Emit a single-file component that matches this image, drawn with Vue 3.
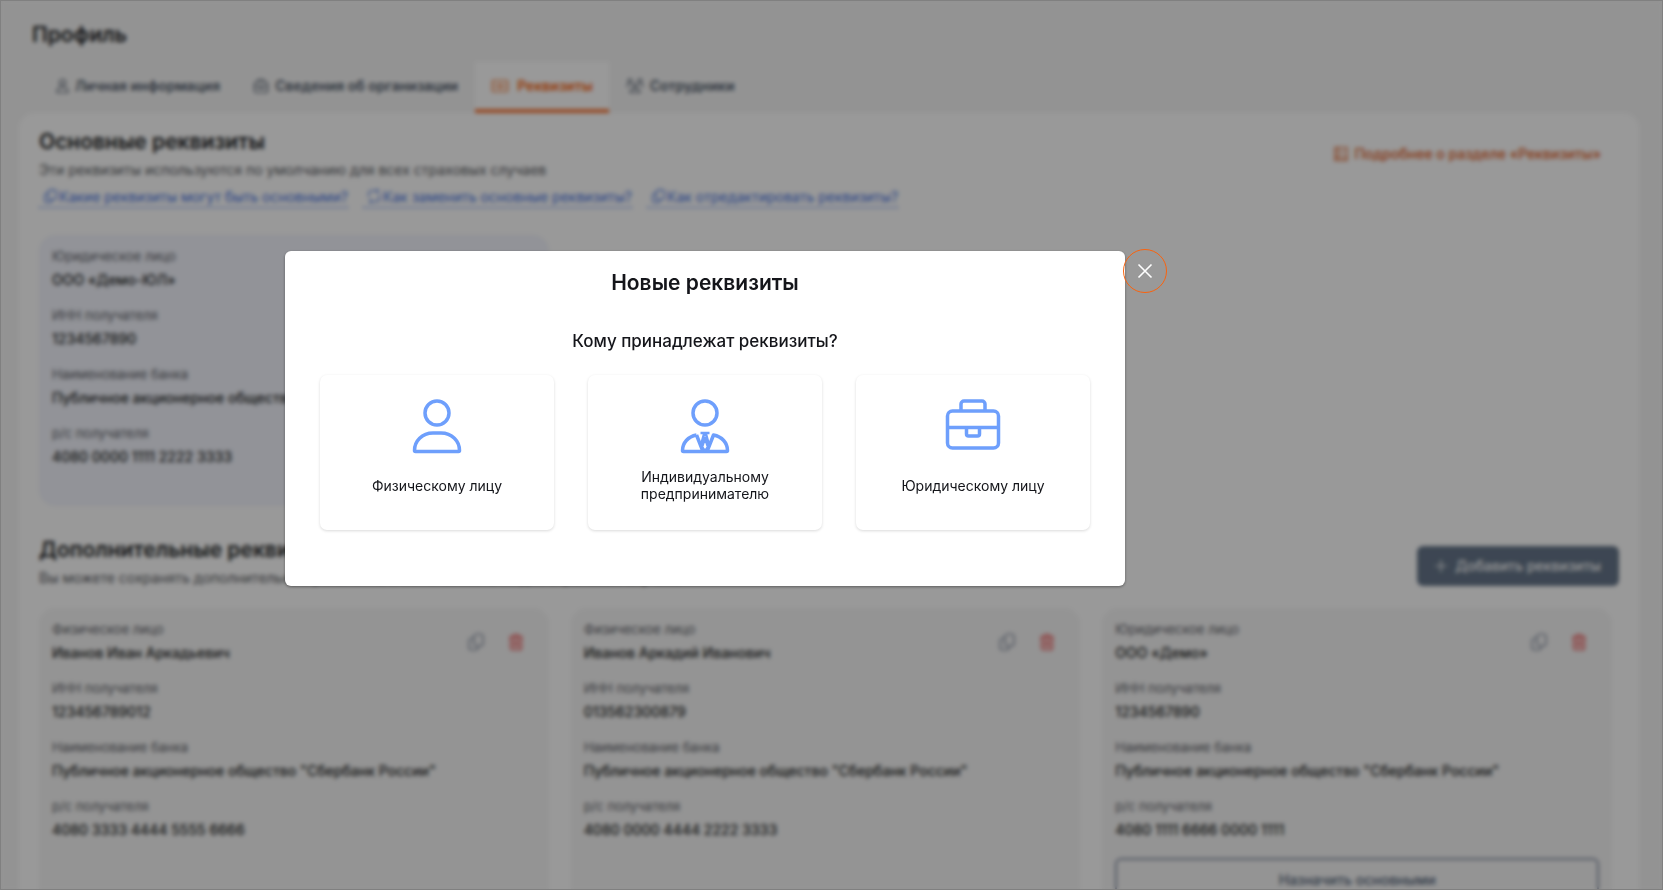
<script setup>
    import { ref, onMounted, onBeforeUnmount } from 'vue'

    const isOpen = ref(true)

    const tabs = [
        { id: 'personal', title: 'Личная информация' },
        { id: 'company', title: 'Сведения об организации' },
        { id: 'requisites', title: 'Реквизиты' },
        { id: 'staff', title: 'Сотрудники' }
    ]
    const activeTab = ref('requisites')

    const helpLinks = [
        { icon: 'copy', title: 'Какие реквизиты могут быть основными?' },
        { icon: 'replace', title: 'Как заменить основные реквизиты?' },
        { icon: 'copy', title: 'Как отредактировать реквизиты?' }
    ]

    const bank = 'Публичное акционерное общество "Сбербанк России"'

    const makeFields = (type, name, inn, account) => [
        { label: type, value: name },
        { label: 'ИНН получателя', value: inn },
        { label: 'Наименование банка', value: bank },
        { label: 'р/с получателя', value: account }
    ]

    const mainFields = makeFields('Юридическое лицо', 'ООО «Демо-ЮЛ»', '1234567890', '4080 0000 1111 2222 3333')

    const extraCards = [
        { id: 1, fields: makeFields('Физическое лицо', 'Иванов Иван Аркадьевич', '123456789012', '4080 3333 4444 5555 6666') },
        { id: 2, fields: makeFields('Физическое лицо', 'Иванов Аркадий Иванович', '013562300879', '4080 0000 4444 2222 3333') },
        { id: 3, fields: makeFields('Юридическое лицо', 'ООО «Демо»', '1234567890', '4080 1111 6666 0000 1111'), canBeMain: true }
    ]

    const owners = [
        { id: 'person', title: 'Физическому лицу' },
        { id: 'entrepreneur', title: 'Индивидуальному предпринимателю' },
        { id: 'company', title: 'Юридическому лицу' }
    ]

    const open = () => {
        isOpen.value = true
    }

    const close = () => {
        isOpen.value = false
    }

    const handleKeydown = (e) => {
        if (e.key === 'Escape') {
            close()
        }
    }

    onMounted(() => {
        document.addEventListener('keydown', handleKeydown)
    })

    onBeforeUnmount(() => {
        document.removeEventListener('keydown', handleKeydown)
    })
</script>

<template>
    <div class="page">
        <h1 class="page-title">Профиль</h1>

        <!-- tabs -->
        <nav class="tabs">
            <button
                v-for="tab in tabs"
                :key="tab.id"
                type="button"
                class="tab"
                :class="{ active: tab.id === activeTab }"
                @click="activeTab = tab.id"
            >
                <svg v-if="tab.id === 'personal'" class="icon icon-narrow" viewBox="0 0 13 16">
                    <circle cx="6.5" cy="4.5" r="3" />
                    <path d="M1 14.5c0-3 1.5-5 3.500-5h4c2 0 3.500 2 3.500 5z" />
                </svg>
                <svg v-else-if="tab.id === 'company'" class="icon" viewBox="0 0 16 16">
                    <rect x="1.5" y="4" width="13" height="10.5" rx="2" />
                    <path d="M5 4V2.5a1 1 0 0 1 1-1h4a1 1 0 0 1 1 1V4M1.5 8.5h13M6.5 8.5v2h3v-2" />
                </svg>
                <svg v-else-if="tab.id === 'requisites'" class="icon icon-wide" viewBox="0 0 18 16">
                    <rect x="1.5" y="2.5" width="15" height="11" rx="1" />
                    <circle cx="9" cy="8" r="2" />
                    <path d="M4.5 7v2M13.5 7v2" />
                </svg>
                <svg v-else class="icon icon-wide" viewBox="0 0 18 16">
                    <circle cx="4" cy="3" r="1.8" />
                    <circle cx="14" cy="3" r="1.8" />
                    <circle cx="9" cy="7.5" r="2" />
                    <path d="M1 9c0-2 1-3 3-3M17 9c0-2-1-3-3-3M4 14.5c0-2 1.5-3.5 3-3.5h4c1.5 0 3 1.5 3 3.5z" />
                </svg>
                <span>{{ tab.title }}</span>
            </button>
        </nav>

        <main class="panel">
            <section class="section-head">
                <div>
                    <h2>Основные реквизиты</h2>
                    <p class="hint">Эти реквизиты используются по умолчанию для всех страховых случаев</p>
                    <div class="help-links">
                        <a v-for="link in helpLinks" :key="link.title" href="#" class="help-link">
                            <svg class="icon" viewBox="0 0 16 18">
                                <template v-if="link.icon === 'copy'">
                                    <rect x="6" y="1" width="9" height="11" rx="3" />
                                    <path d="M6 4.5H5a3 3 0 0 0-3 3V12a3 3 0 0 0 3 3h2a3 3 0 0 0 3-3" />
                                </template>
                                <path v-else d="M2 9V5a3 3 0 0 1 3-3h8M11 0l2 2-2 2M14 6v5a3 3 0 0 1-3 3H3M5 12l-2 2 2 2" />
                            </svg>
                            <span>{{ link.title }}</span>
                        </a>
                    </div>
                </div>
                <a href="#" class="more-link">
                    <svg class="icon" viewBox="0 0 16 16">
                        <path d="M2 1.5h12v13H2zM5 1.5v10M8 5h3M8 8h3M2 12h12" />
                    </svg>
                    <span>Подробнее о разделе «Реквизиты»</span>
                </a>
            </section>

            <div class="cards">
                <article class="card card-main">
                    <dl>
                        <div v-for="field in mainFields" :key="field.label" class="field">
                            <dt>{{ field.label }}</dt>
                            <dd>{{ field.value }}</dd>
                        </div>
                    </dl>
                </article>
            </div>

            <section class="section-head section-extra">
                <div>
                    <h2>Дополнительные реквизиты</h2>
                    <p class="hint">Вы можете сохранять дополнительные реквизиты и использовать их для страховых случаев</p>
                </div>
                <button type="button" class="btn-add" @click="open">
                    <svg class="icon" viewBox="0 0 12 12">
                        <path d="M6 0v12M0 6h12" />
                    </svg>
                    <span>Добавить реквизиты</span>
                </button>
            </section>

            <div class="cards cards-extra">
                <article v-for="card in extraCards" :key="card.id" class="card">
                    <div class="card-actions">
                        <button type="button" aria-label="Копировать">
                            <svg class="icon" viewBox="0 0 16 18">
                                <rect x="6" y="1" width="9" height="12" rx="3" />
                                <path d="M6 5H4a3 3 0 0 0-3 3v6a3 3 0 0 0 3 3h3a3 3 0 0 0 3-3v-1" />
                            </svg>
                        </button>
                        <button type="button" class="danger" aria-label="Удалить">
                            <svg class="icon" viewBox="0 0 16 18">
                                <path class="bin" d="M2.5 4h11v11a2 2 0 0 1-2 2h-7a2 2 0 0 1-2-2z" />
                                <path d="M1 4h14M5.5 4V1.5h5V4M6.5 8v5M9.5 8v5" />
                            </svg>
                        </button>
                    </div>
                    <dl>
                        <div v-for="field in card.fields" :key="field.label" class="field">
                            <dt>{{ field.label }}</dt>
                            <dd>{{ field.value }}</dd>
                        </div>
                    </dl>
                    <button v-if="card.canBeMain" type="button" class="btn-outline">Назначить основными</button>
                </article>
            </div>
        </main>

        <!-- modal -->
        <div v-if="isOpen" class="overlay" @click.self="close">
            <div class="modal-box" role="dialog" aria-modal="true" aria-labelledby="modal-title">
                <button type="button" class="modal-close" aria-label="Закрыть" @click="close">
                    <svg viewBox="0 0 16 16">
                        <path d="M1.5 1.5l13 13M14.5 1.5l-13 13" />
                    </svg>
                </button>
                <h2 id="modal-title" class="modal-title">Новые реквизиты</h2>
                <p class="modal-question">Кому принадлежат реквизиты?</p>
                <div class="owners">
                    <button v-for="owner in owners" :key="owner.id" type="button" class="owner">
                        <svg viewBox="0 0 56 56">
                            <template v-if="owner.id === 'company'">
                                <rect x="2.5" y="12" width="51" height="37" rx="5" />
                                <path d="M16 12V5a3 3 0 0 1 3-3h18a3 3 0 0 1 3 3v7M2.5 28.5h51M21.5 29v6a2 2 0 0 0 2 2h9a2 2 0 0 0 2-2v-6" />
                            </template>
                            <template v-else>
                                <circle cx="28" cy="14" r="12" />
                                <path v-if="owner.id === 'person'" d="M24 34h8c11 0 18.500 8 18.500 17.500a1 1 0 0 1-1 1h-43a1 1 0 0 1-1-1C5.500 42 13 34 24 34z" />
                                <template v-else>
                                    <path d="M19.500 36C11 37.500 5.500 44 5.500 51.500a1 1 0 0 0 1 1h43a1 1 0 0 0 1-1C50.500 44 45 37.500 36.500 36L30 52.500M19.500 36L26 52.500" />
                                    <path class="tie" d="M23.500 34h9M27 35l-3 11M29 35l3 11M28 39l-3 9 3 4 3-4z" />
                                </template>
                            </template>
                        </svg>
                        <span class="owner-title">{{ owner.title }}</span>
                    </button>
                </div>
            </div>
        </div>
    </div>
</template>

<style>
    html,
    body,
    #app {
        height: 100%;
    }

    body {
        margin: 0;
        overflow: hidden;
    }
</style>

<style scoped>
    .page {
        position: relative;
        height: 100%;
        box-sizing: border-box;
        overflow: hidden;
        background: #f6f6f6;
        color: #1d1f23;
        font-family: Inter, "Noto Sans", sans-serif;
        font-size: 14px;
        line-height: 20px;
    }

    .page * {
        box-sizing: border-box;
    }

    h1,
    h2,
    p,
    dl,
    dd {
        margin: 0;
    }

    button {
        font: inherit;
        color: inherit;
        border: 0;
        background: none;
        padding: 0;
        cursor: pointer;
    }

    .icon {
        flex: none;
        width: 16px;
        height: 16px;
        fill: none;
        stroke: currentColor;
        stroke-width: 1.2;
    }

    .icon-narrow {
        width: 13px;
    }

    .icon-wide {
        width: 18px;
    }

    .page-title {
        padding: 20px 32px 0;
        font-size: 21px;
        line-height: 30px;
        font-weight: 600;
    }

    .tabs {
        display: flex;
        gap: 1px;
        margin-top: 12px;
        padding: 0 40px;
    }

    .tab {
        display: flex;
        align-items: center;
        gap: 6px;
        height: 51px;
        padding: 0 16px;
        border-bottom: 4px solid transparent;
        color: #4d5868;
        font-weight: 600;
    }

    .tab.active {
        gap: 8px;
        border-color: #fa7a3c;
        background: #fff;
        color: #f9620d;
    }

    .panel {
        min-height: 800px;
        margin: 0 24px 0 19px;
        padding: 16px 20px;
        border-radius: 16px;
        background: #fff;
    }

    .section-head {
        display: flex;
        justify-content: space-between;
        align-items: flex-start;
    }

    h2 {
        font-size: 21px;
        line-height: 26px;
        font-weight: 600;
    }

    .hint {
        margin-top: 3px;
        line-height: 24px;
        color: #55575c;
    }

    .help-links {
        display: flex;
        gap: 15px;
        margin-top: 5px;
    }

    .help-link {
        display: flex;
        align-items: center;
        gap: 1px;
        padding-left: 3px;
        border-bottom: 1px dashed #3f73ea;
        color: #3f6fe0;
        text-decoration: none;
    }

    .more-link {
        display: flex;
        align-items: center;
        gap: 5px;
        margin: 15px 18px 0 0;
        color: #e0591a;
        font-weight: 500;
        text-decoration: none;
    }

    .cards {
        display: grid;
        grid-template-columns: repeat(3, 1fr);
        gap: 22px;
        margin: 27px 7px 0 0;
    }

    .cards-extra {
        margin-top: 18px;
    }

    .card {
        position: relative;
        min-height: 271px;
        padding: 9px 13px 20px;
        border-radius: 16px;
        background: #f7f7f7;
    }

    .card-main {
        background: #f3f5fd;
    }

    .field {
        padding-bottom: 11px;
        line-height: 24px;
    }

    dt {
        color: #5c5e66;
        font-size: 13px;
    }

    dd {
        font-weight: 500;
    }

    .card-actions {
        position: absolute;
        top: 25px;
        right: 25px;
        display: flex;
        gap: 24px;
        color: #6f7a90;
    }

    .card-actions .icon {
        display: block;
        height: 18px;
    }

    .danger {
        color: #ee5a5a;
    }

    .bin {
        fill: #ee5a5a;
        fill-opacity: 0.3;
    }

    .section-extra {
        margin-top: 31px;
    }

    .btn-add {
        display: flex;
        align-items: center;
        gap: 8px;
        height: 40px;
        margin-top: 9px;
        padding: 0 18px;
        border-radius: 6px;
        background: #66768a;
        color: #fff;
        font-weight: 500;
    }

    .btn-add .icon {
        width: 12px;
        height: 12px;
    }

    .btn-outline {
        width: 100%;
        height: 44px;
        margin-top: 5px;
        border: 2px solid #8b94a8;
        border-radius: 6px;
        color: #4d5d74;
        font-weight: 500;
    }

    .overlay {
        position: absolute;
        inset: 0;
        display: flex;
        justify-content: center;
        align-items: flex-start;
        padding: 250px 253px 0 0;
        border: 1px solid #808080;
        background: rgba(0, 0, 0, 0.4);
        backdrop-filter: blur(2px);
    }

    .modal-box {
        position: relative;
        width: 840px;
        padding: 18px 35px 56px;
        border-radius: 6px;
        background: #fff;
        box-shadow: 0 1px 3px rgba(0, 0, 0, 0.4);
        color: #14151a;
        text-align: center;
    }

    .modal-title {
        font-size: 21px;
        line-height: 28px;
        font-weight: 600;
    }

    .modal-question {
        margin-top: 32px;
        font-size: 17px;
        line-height: 24px;
        font-weight: 500;
    }

    .modal-close {
        position: absolute;
        top: -2px;
        right: -42px;
        display: flex;
        align-items: center;
        justify-content: center;
        width: 44px;
        height: 44px;
        border: 1px solid #f9620d;
        border-radius: 50%;
    }

    .modal-close svg {
        width: 16px;
        height: 16px;
        fill: none;
        stroke: #fff;
        stroke-width: 1.6;
    }

    .owners {
        display: grid;
        grid-template-columns: repeat(3, 1fr);
        gap: 34px;
        margin-top: 22px;
    }

    .owner {
        display: flex;
        flex-direction: column;
        align-items: center;
        height: 155px;
        padding: 24px 40px;
        border-radius: 7px;
        box-shadow: 0 1px 3px rgba(0, 0, 0, 0.15);
        line-height: 17px;
    }

    .owner svg {
        flex: none;
        width: 56px;
        height: 56px;
        fill: none;
        stroke: #6e9ffc;
        stroke-width: 3.5;
        stroke-linejoin: round;
    }

    .owner .tie {
        stroke-width: 2.5;
    }

    .owner-title {
        display: flex;
        align-items: center;
        height: 34px;
        margin-top: 13px;
    }
</style>
